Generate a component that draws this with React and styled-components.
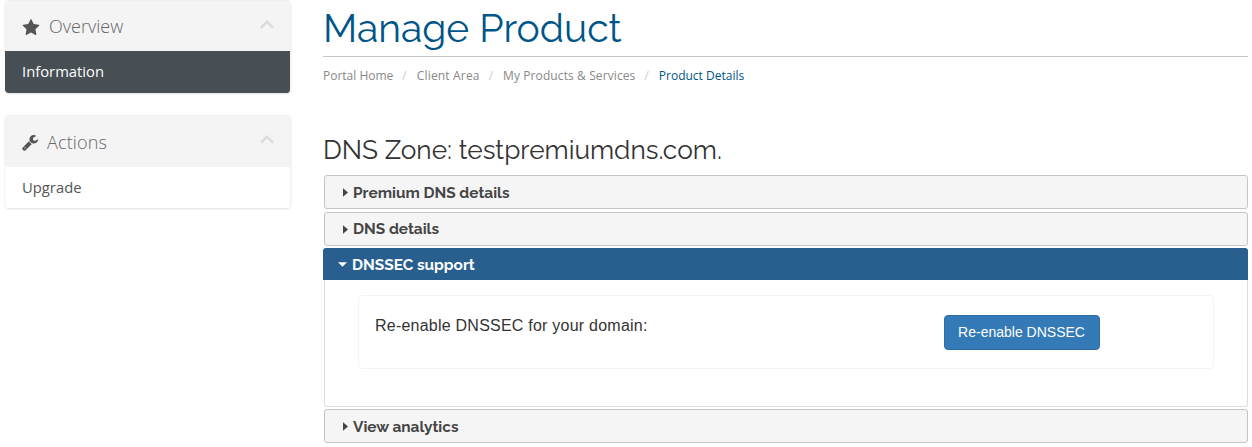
import React from "react";
import styled, { createGlobalStyle } from "styled-components";

const GlobalStyle = createGlobalStyle`
  *, *::before, *::after { box-sizing: border-box; }
  body {
    margin: 0;
    background: #fff;
    color: #333;
    font-family: "Open Sans", "Noto Sans", sans-serif;
    overflow: hidden;
  }
`;

const Page = styled.div`
  display: flex;
  align-items: flex-start;
  width: 1252px;
  height: 447px;
  padding: 0 4px 0 5px;
`;

const Sidebar = styled.aside`
  display: flex;
  flex-direction: column;
  gap: 22px;
  width: 286px;
  margin-right: 32px;
  flex: none;
`;

const Panel = styled.section`
  border: 1px solid #f0f0f0;
  border-left: 0;
  border-bottom: 0;
  border-radius: 4px;
  overflow: hidden;
  box-shadow: 0 1px 2px rgba(0, 0, 0, 0.12);
`;

const PanelHeader = styled.header`
  display: flex;
  align-items: center;
  height: ${({ $height }) => $height}px;
  padding: 0 16px 0 17px;
  background: #f4f4f4;
  color: #666;
  font-size: 18px;
  font-weight: 300;
  line-height: 26px;

  > svg {
    flex: none;
  }
`;

const PanelTitle = styled.span`
  flex: 1;
  margin-left: 9px;
  letter-spacing: ${({ $tracking }) => $tracking || 0}px;
`;

const PanelIcon = styled.svg`
  width: ${({ $width }) => $width}px;
  height: 16px;
  margin-top: 2px;
  fill: #555;
`;

const Chevron = styled.svg`
  width: 14px;
  height: 9px;
  margin-bottom: 4px;
  fill: none;
  stroke: #ddd;
  stroke-width: 2.6;
`;

const PanelItem = styled.a`
  display: block;
  height: ${({ $active }) => ($active ? 42 : 41)}px;
  padding-left: 17px;
  background: ${({ $active }) => ($active ? "#474e54" : "#fff")};
  color: ${({ $active }) => ($active ? "#fff" : "#555")};
  font-size: 14.8px;
  line-height: 41px;
`;

const Main = styled.main`
  width: 925px;
  flex: none;
`;

const PageTitle = styled.h1`
  height: 57px;
  margin: 0;
  border-bottom: 1px solid #c8c8c8;
  color: #058;
  font-family: Raleway, Lato, sans-serif;
  font-size: 39px;
  font-weight: 400;
  line-height: 56px;
  white-space: nowrap;
`;

const Breadcrumb = styled.nav`
  display: flex;
  height: 37px;
  font-size: 12px;
  line-height: 37px;
  white-space: nowrap;
`;

const Crumb = styled.span`
  color: ${({ $current }) => ($current ? "#058" : "#888")};
  letter-spacing: ${({ $tracking }) => $tracking || 0}px;

  &:not(:first-child)::before {
    content: "/";
    padding: 0 10px 0 9px;
    color: #ccc;
    letter-spacing: 0;
  }
`;

const ZoneTitle = styled.h2`
  height: 81px;
  margin: 0;
  padding-top: 38px;
  color: #333;
  font-family: Raleway, Lato, sans-serif;
  font-size: 26.25px;
  font-weight: 400;
  line-height: 36px;
  white-space: nowrap;
`;

const Accordion = styled.div`
  display: flex;
  flex-direction: column;
`;

const SectionBar = styled.div`
  display: flex;
  align-items: center;
  height: ${({ $open }) => ($open ? 32 : 34)}px;
  margin-left: ${({ $open }) => ($open ? 0 : 1)}px;
  margin-bottom: ${({ $gap }) => $gap || 0}px;
  padding-left: ${({ $open }) => ($open ? 15 : 18)}px;
  border: ${({ $open }) => ($open ? "0" : "1px solid #c5c5c5")};
  border-radius: ${({ $open }) => ($open ? "3px 3px 0 0" : "3px")};
  background: ${({ $open }) => ($open ? "#285f8f" : "#f5f5f5")};
  color: ${({ $open }) => ($open ? "#fff" : "#454545")};
  font-family: Raleway, Lato, sans-serif;
  font-size: 15.4px;
  font-weight: 700;
  line-height: 20px;
`;

const SectionLabel = styled.span`
  padding-top: ${({ $drop }) => $drop}px;
`;

const Caret = styled.svg`
  width: ${({ $open }) => ($open ? 9 : 5)}px;
  height: ${({ $open }) => ($open ? 5 : 9)}px;
  margin-right: 5px;
  fill: currentColor;
`;

const SectionBody = styled.div`
  height: 127px;
  margin: 0 0 2px 1px;
  padding: 15px 33px 0;
  border: 1px solid #ddd;
  border-top: 0;
  border-radius: 0 0 3px 3px;
`;

const Card = styled.div`
  display: flex;
  align-items: flex-start;
  height: 74px;
  padding: 19px 16px 0;
  border: 1px solid #f4f4f4;
  border-radius: 4px;
  font-family: "Liberation Sans", Arial, sans-serif;
`;

const Prompt = styled.p`
  width: 569px;
  margin: 0;
  color: #333;
  font-size: 16px;
  line-height: 21px;
  letter-spacing: 0.23px;
`;

const PrimaryButton = styled.button`
  width: 156px;
  height: 35px;
  padding: 0 1px 1px 0;
  border: 1px solid #2e6da4;
  border-radius: 4px;
  background: #337ab7;
  color: #fff;
  font-family: inherit;
  font-size: 14px;
  line-height: 20px;
`;

function SidePanel({ icon, title, tracking, headerHeight, children }) {
  return (
    <Panel>
      <PanelHeader $height={headerHeight}>
        {icon}
        <PanelTitle $tracking={tracking}>{title}</PanelTitle>
        <Chevron viewBox="0 0 14 9"><path d="M1 7.7 7 1.8l6 5.9" /></Chevron>
      </PanelHeader>
      {children}
    </Panel>
  );
}

function Section({ title, open, gap, drop = 1 }) {
  return (
    <SectionBar $open={open} $gap={gap}>
      {open ? (
        <Caret $open viewBox="0 0 9 5"><path d="M0 .3h9L4.500 4.800z" /></Caret>
      ) : (
        <Caret viewBox="0 0 5 9"><path d="M0 .3v8.400l5-4.200z" /></Caret>
      )}
      <SectionLabel $drop={drop}>{title}</SectionLabel>
    </SectionBar>
  );
}

function Star() {
  return (
    <PanelIcon $width={18} viewBox="0 0 1664 1587">
      <path d="M1664 615q0 22-26 48l-363 354 86 500q1 7 1 20 0 21-10.500 35.500T1321 1587q-19 0-40-12l-449-236-449 236q-22 12-40 12-21 0-31.500-14.500T301 1537q0-6 2-20l86-500L25 663Q0 636 0 615q0-37 56-46l502-73L783 41q19-41 49-41t49 41l225 455 502 73q56 9 56 46z" />
    </PanelIcon>
  );
}

function Wrench() {
  return (
    <PanelIcon $width={16} viewBox="0 0 1664 1664">
      <path d="M384 1344q0-26-19-45t-45-19-45 19-19 45 19 45 45 19 45-19 19-45zm644-420l-682 682q-37 37-90 37-52 0-91-37L59 1498q-38-36-38-90 0-53 38-91l681-681q39 98 114.500 173.500T1028 924zm634-435q0 39-23 106-47 134-164.500 217.500T1216 896q-185 0-316.500-131.500T768 448t131.500-316.500T1216 0q58 0 121.500 16.500T1445 63q16 11 16 28t-16 28l-293 169v224l193 107q5-3 79-48.500t135.500-81T1630 454q15 0 23.500 10t8.500 25z" />
    </PanelIcon>
  );
}

export default function App() {
  return (
    <>
      <GlobalStyle />
      <Page>
        <Sidebar>
          <SidePanel icon={<Star />} title="Overview" headerHeight={50}>
            <PanelItem $active>Information</PanelItem>
          </SidePanel>
          <SidePanel icon={<Wrench />} title="Actions" tracking={0.15} headerHeight={51}>
            <PanelItem>Upgrade</PanelItem>
          </SidePanel>
        </Sidebar>
        <Main>
          <PageTitle>Manage Product</PageTitle>
          <Breadcrumb>
            <Crumb>Portal Home</Crumb>
            <Crumb $tracking={0.17}>Client Area</Crumb>
            <Crumb $tracking={0.1}>My Products &amp; Services</Crumb>
            <Crumb $current>Product Details</Crumb>
          </Breadcrumb>
          <ZoneTitle>DNS Zone: testpremiumdns.com.</ZoneTitle>
          <Accordion>
            <Section title="Premium DNS details" gap={3} />
            <Section title="DNS details" gap={2} drop={0} />
            <Section title="DNSSEC support" open />
            <SectionBody>
              <Card>
                <Prompt>Re-enable DNSSEC for your domain:</Prompt>
                <PrimaryButton type="button">Re-enable DNSSEC</PrimaryButton>
              </Card>
            </SectionBody>
            <Section title="View analytics" />
          </Accordion>
        </Main>
      </Page>
    </>
  );
}
